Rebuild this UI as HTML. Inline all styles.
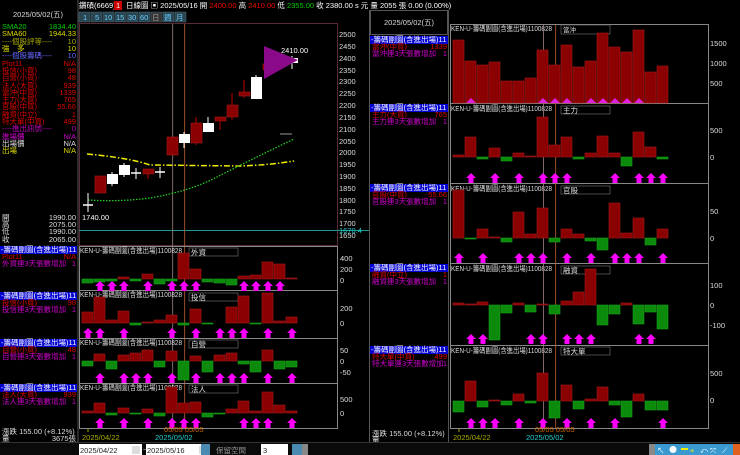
<!DOCTYPE html><html><head><meta charset="utf-8"><style>
body{margin:0;background:#000;width:740px;height:455px;overflow:hidden}
svg{display:block}
text{font-family:"Liberation Sans","Noto Sans CJK TC",sans-serif;font-size:7.5px}
.r{fill:#8b0000;stroke:#a51a1a;stroke-width:.6}
.g{fill:#0b8a0b;stroke:#1aa01a;stroke-width:.6}
.w{fill:#fff}
.ax{fill:#ddd;font-size:7.5px}
.t{fill:#ddd;font-size:6.5px}
.fr{fill:none;stroke:#888;stroke-width:1}
.s{font-size:6.2px}
</style></head><body>
<svg width="740" height="455" viewBox="0 0 740 455" xmlns="http://www.w3.org/2000/svg">
<defs>
<symbol id="ar" viewBox="0 0 10 10"><polygon points="5,0 10,5 7.5,5 7.5,10 2.5,10 2.5,5 0,5" fill="#f0f"/></symbol>
<symbol id="tr" viewBox="0 0 10 5"><polygon points="5,0 10,5 0,5" fill="#e020e0"/></symbol>
</defs>
<rect width="740" height="455" fill="#000"/>
<!-- header -->
<text x="79" y="8" fill="#fff">鑽碩(6669)</text>
<rect x="114" y="1" width="8" height="9" fill="#c00"/><text x="116" y="8" fill="#fff">1</text>
<text x="126" y="8" fill="#fff">日線圖 ▣ 2025/05/16 開 <tspan fill="#e00">2400.00</tspan> 高 <tspan fill="#e00">2410.00</tspan> 低 <tspan fill="#0c0">2355.00</tspan> 收 2380.00 s 元 量 2055 張  0.00 (0.00%)</text>
<g fill="#2a4550" stroke="#4a6a78" stroke-width=".5">
<rect x="79" y="12" width="11" height="10"/><rect x="91" y="12" width="11" height="10"/><rect x="103" y="12" width="11" height="10"/><rect x="115" y="12" width="11" height="10"/><rect x="127" y="12" width="11" height="10"/><rect x="139" y="12" width="11" height="10"/><rect x="151" y="12" width="11" height="10" fill="#333"/><rect x="163" y="12" width="11" height="10"/><rect x="175" y="12" width="11" height="10"/></g>
<g fill="#6cf" font-size="7"><text x="83" y="20">1</text><text x="95" y="20">5</text><text x="104" y="20">10</text><text x="116" y="20">15</text><text x="128" y="20">30</text><text x="140" y="20">60</text><text x="152" y="20" fill="#999">日</text><text x="164" y="20">週</text><text x="176" y="20">月</text></g>
<line x1="78" y1="0" x2="78" y2="443" stroke="#555"/>
<text x="13" y="17" fill="#ddd" font-size="7">2025/05/02(五)</text>
<!-- left info -->
<g class="s">
<text x="2" y="29" fill="#0c0">SMA20</text><text x="76" y="29" fill="#0c0" text-anchor="end">1834.40</text>
<text x="2" y="36" fill="#dd0">SMA60</text><text x="76" y="36" fill="#dd0" text-anchor="end">1944.33</text>
<text x="2" y="44" fill="#aa0">----個股評等----</text><text x="76" y="44" fill="#aa0" text-anchor="end">10</text>
<text x="2" y="51" fill="#dd0">強　多</text><text x="76" y="51" fill="#dd0" text-anchor="end">10</text>
<text x="2" y="58" fill="#66f">----個股籌碼----</text><text x="76" y="58" fill="#66f" text-anchor="end">10</text>
<text x="2" y="66" fill="#d00">Plot11</text><text x="76" y="66" fill="#d00" text-anchor="end">N/A</text>
<text x="2" y="73" fill="#d00">投信(小買)</text><text x="76" y="73" fill="#d00" text-anchor="end">98</text>
<text x="2" y="80" fill="#d00">自營(小買)</text><text x="76" y="80" fill="#d00" text-anchor="end">48</text>
<text x="2" y="88" fill="#d00">法人(大買)</text><text x="76" y="88" fill="#d00" text-anchor="end">939</text>
<text x="2" y="95" fill="#d00">當沖(中買)</text><text x="76" y="95" fill="#d00" text-anchor="end">1339</text>
<text x="2" y="102" fill="#d00">主力(大買)</text><text x="76" y="102" fill="#d00" text-anchor="end">765</text>
<text x="2" y="109" fill="#d00">官股(中買)</text><text x="76" y="109" fill="#d00" text-anchor="end">55.66</text>
<text x="2" y="117" fill="#d00">融資(中立)</text><text x="76" y="117" fill="#d00" text-anchor="end">1</text>
<text x="2" y="124" fill="#d00">特大單(中買)</text><text x="76" y="124" fill="#d00" text-anchor="end">499</text>
<text x="2" y="131" fill="#b0b">----進出訊號----</text><text x="76" y="131" fill="#b0b" text-anchor="end">0</text>
<text x="2" y="139" fill="#c0c">進場價</text><text x="76" y="139" fill="#c0c" text-anchor="end">N/A</text>
<text x="2" y="146" fill="#ddd">出場價</text><text x="76" y="146" fill="#ddd" text-anchor="end">N/A</text>
<text x="2" y="153" fill="#dd0">出場</text><text x="76" y="153" fill="#dd0" text-anchor="end">N/A</text>
<text x="2" y="220" fill="#ddd">開</text><text x="76" y="220" fill="#ddd" text-anchor="end">1990.00</text>
<text x="2" y="227" fill="#ddd">高</text><text x="76" y="227" fill="#ddd" text-anchor="end">2075.00</text>
<text x="2" y="234" fill="#ddd">低</text><text x="76" y="234" fill="#ddd" text-anchor="end">1990.00</text>
<text x="2" y="242" fill="#ddd">收</text><text x="76" y="242" fill="#ddd" text-anchor="end">2065.00</text>
</g>
<!-- left sub labels -->
<g class="s">
<rect x="0" y="246" width="77" height="8" fill="#0000d0"/><text x="1" y="252" fill="#fff">-籌碼副圖(含進出場)11</text><text x="2" y="259" fill="#d00">Plot11</text><text x="76" y="259" fill="#d00" text-anchor="end">N/A</text><text x="2" y="266" fill="#c0c">外資連3天張數增加</text><text x="76" y="266" fill="#c0c" text-anchor="end">1</text>
<rect x="0" y="292" width="77" height="8" fill="#0000d0"/><text x="1" y="298" fill="#fff">-籌碼副圖(含進出場)11</text><text x="2" y="305" fill="#d00">投信(小買)</text><text x="76" y="305" fill="#d00" text-anchor="end">98</text><text x="2" y="312" fill="#c0c">投信連3天張數增加</text><text x="76" y="312" fill="#c0c" text-anchor="end">1</text>
<rect x="0" y="339" width="77" height="8" fill="#0000d0"/><text x="1" y="345" fill="#fff">-籌碼副圖(含進出場)11</text><text x="2" y="352" fill="#d00">自營(小買)</text><text x="76" y="352" fill="#d00" text-anchor="end">48</text><text x="2" y="359" fill="#c0c">自營連3天張數增加</text><text x="76" y="359" fill="#c0c" text-anchor="end">1</text>
<rect x="0" y="384" width="77" height="8" fill="#0000d0"/><text x="1" y="390" fill="#fff">-籌碼副圖(含進出場)11</text><text x="2" y="397" fill="#d00">法人(大買)</text><text x="76" y="397" fill="#d00" text-anchor="end">939</text><text x="2" y="404" fill="#c0c">法人連3天張數增加</text><text x="76" y="404" fill="#c0c" text-anchor="end">1</text>
<text x="2" y="434" fill="#ddd" font-size="7">漲跌   155.00 (+8.12%)</text><text x="2" y="441" fill="#ddd" font-size="7">量</text><text x="76" y="441" fill="#ddd" text-anchor="end" font-size="7">3675張</text>
</g>
<!-- main chart frame -->
<rect x="79.5" y="23.5" width="258" height="222" fill="none" stroke="#5a2a35"/>
<g class="ax">
<text x="339" y="37">2500</text><text x="339" y="49">2450</text><text x="339" y="61">2400</text><text x="339" y="73">2350</text><text x="339" y="84">2300</text><text x="339" y="96">2250</text><text x="339" y="108">2200</text><text x="339" y="120">2150</text><text x="339" y="132">2100</text><text x="339" y="144">2050</text><text x="339" y="155">2000</text><text x="339" y="167">1950</text><text x="339" y="179">1900</text><text x="339" y="191">1850</text><text x="339" y="203">1800</text><text x="339" y="214">1750</text><text x="339" y="226">1700</text><text x="339" y="238">1650</text>
</g>
<line x1="79" y1="230.5" x2="370" y2="230.5" stroke="#1a9a9a"/>
<text x="339" y="233" fill="#2cc" font-size="7.5">1670.4</text>
<line x1="172.7" y1="24" x2="172.7" y2="428" stroke="#a08080" stroke-width=".8"/>
<line x1="184.7" y1="24" x2="184.7" y2="428" stroke="#c06030" stroke-width=".8"/>
<!-- SMA lines -->
<path d="M87,154 Q130,158 150,165 L240,166 Q270,165 294,161" fill="none" stroke="#ee0" stroke-width="1.5" stroke-dasharray="6,2,1.5,2"/>
<path d="M88,200 Q120,202 150,198 Q190,191 215,178 Q250,160 294,139" fill="none" stroke="#2c2" stroke-width="1.3" stroke-dasharray="1.5,1.5"/>
<line x1="280" y1="134" x2="292" y2="134" stroke="#999"/>
<!-- candles -->
<g stroke-width="1">
<line x1="88" y1="193" x2="88" y2="212" stroke="#fff"/><line x1="83" y1="205" x2="93" y2="205" stroke="#fff" stroke-width="1.5"/>
<rect x="95" y="176" width="11" height="17" class="r"/>
<line x1="112" y1="172" x2="112" y2="186" stroke="#fff"/><rect x="107" y="174" width="11" height="10" class="w"/>
<line x1="124" y1="163" x2="124" y2="177" stroke="#fff"/><rect x="119" y="165" width="11" height="10" class="w"/>
<line x1="136" y1="168" x2="136" y2="179" stroke="#fff"/><line x1="131" y1="173" x2="141" y2="173" stroke="#fff" stroke-width="1.5"/>
<line x1="148" y1="169" x2="148" y2="179" stroke="#b00"/><rect x="143" y="169" width="11" height="5" class="r"/>
<line x1="160" y1="167" x2="160" y2="178" stroke="#fff"/><line x1="155" y1="172" x2="165" y2="172" stroke="#fff" stroke-width="1.5"/>
<rect x="167" y="137" width="11" height="18" class="r"/>
<line x1="184" y1="132" x2="184" y2="148" stroke="#fff"/><rect x="179" y="134" width="11" height="9" class="w"/>
<line x1="196" y1="117" x2="196" y2="145" stroke="#b00"/><rect x="191" y="123" width="11" height="20" class="r"/>
<line x1="208" y1="117" x2="208" y2="132" stroke="#fff"/><rect x="203" y="123" width="11" height="9" class="w"/>
<line x1="220" y1="117" x2="220" y2="130" stroke="#b00"/><rect x="215" y="117" width="11" height="4" class="r"/>
<line x1="232" y1="93" x2="232" y2="120" stroke="#b00"/><rect x="227" y="105" width="11" height="12" class="r"/>
<line x1="244" y1="80" x2="244" y2="98" stroke="#b00"/><rect x="239" y="92" width="11" height="4" class="r"/>
<line x1="256" y1="75" x2="256" y2="99" stroke="#fff"/><rect x="251" y="77" width="11" height="22" class="w"/>
<line x1="268" y1="62" x2="268" y2="76" stroke="#b00"/><rect x="263" y="64" width="11" height="6" class="r"/>
<line x1="292" y1="56" x2="292" y2="69" stroke="#fff"/><rect x="287" y="58" width="11" height="5" class="w"/>
</g>
<polygon points="264,46 298,60 264,79" fill="#8a0a8a"/>
<text x="281" y="53" fill="#fff" font-size="7.5">2410.00</text>
<text x="82" y="220" fill="#fff" font-size="7.5">1740.00</text>
<!-- left sub panels -->
<g class="fr"><rect x="79.5" y="246.5" width="258" height="44"/><rect x="79.5" y="290.5" width="258" height="48"/><rect x="79.5" y="338.5" width="258" height="45"/><rect x="79.5" y="383.5" width="258" height="45"/></g>
<g class="t">
<text x="80" y="253" textLength="102" lengthAdjust="spacingAndGlyphs">KEN-U-籌碼副圖(含進出場)1100828</text><text x="80" y="297" textLength="102" lengthAdjust="spacingAndGlyphs">KEN-U-籌碼副圖(含進出場)1100828</text><text x="80" y="345" textLength="102" lengthAdjust="spacingAndGlyphs">KEN-U-籌碼副圖(含進出場)1100828</text><text x="80" y="390" textLength="102" lengthAdjust="spacingAndGlyphs">KEN-U-籌碼副圖(含進出場)1100828</text>
</g>
<g fill="#000" stroke="#777" stroke-width=".6"><rect x="189" y="248" width="49" height="8"/><rect x="189" y="293" width="49" height="8"/><rect x="189" y="340" width="49" height="8"/><rect x="189" y="385" width="49" height="8"/>
<rect x="561" y="106" width="49" height="8"/><rect x="561" y="186" width="49" height="8"/><rect x="561" y="266" width="49" height="8"/><rect x="561" y="347" width="49" height="8"/></g>
<g class="t"><text x="191" y="255">外資</text><text x="191" y="300">投信</text><text x="191" y="347">自營</text><text x="191" y="392">法人</text>
<text x="563" y="113">主力</text><text x="563" y="193">官股</text><text x="563" y="273">融資</text><text x="563" y="354">特大單</text></g>
<g class="ax">
<text x="340" y="261">400</text><text x="340" y="272">200</text><text x="340" y="283">0</text>
<text x="340" y="311">200</text><text x="340" y="326">0</text>
<text x="340" y="353">50</text><text x="340" y="364">0</text><text x="340" y="375">-50</text>
<text x="340" y="402">500</text><text x="340" y="416">0</text>
</g>
<!-- 外資 -->
<rect x="82" y="279" width="11" height="4" class="g"/><rect x="94" y="279" width="11" height="3" class="g"/><rect x="106" y="279" width="11" height="2" class="g"/><rect x="118" y="277" width="11" height="2" class="r"/><rect x="130" y="279" width="11" height="2" class="g"/><rect x="142" y="274" width="11" height="5" class="r"/><rect x="154" y="279" width="11" height="5" class="g"/><rect x="166" y="279" width="11" height="2" class="g"/><rect x="178" y="253" width="11" height="26" class="r"/><rect x="190" y="269" width="11" height="10" class="r"/><rect x="202" y="279" width="11" height="3" class="g"/><rect x="214" y="279" width="11" height="4" class="g"/><rect x="226" y="279" width="11" height="6" class="g"/><rect x="238" y="276" width="11" height="3" class="r"/><rect x="250" y="275" width="11" height="4" class="r"/><rect x="262" y="262" width="11" height="17" class="r"/><rect x="274" y="264" width="11" height="15" class="r"/><rect x="286" y="278" width="11" height="1" class="r"/>
<g><use href="#ar" x="95" y="281" width="10" height="10"/><use href="#ar" x="107" y="281" width="10" height="10"/><use href="#ar" x="119" y="281" width="10" height="10"/><use href="#ar" x="143" y="281" width="10" height="10"/><use href="#ar" x="167" y="281" width="10" height="10"/><use href="#ar" x="179" y="281" width="10" height="10"/><use href="#ar" x="191" y="281" width="10" height="10"/><use href="#ar" x="239" y="281" width="10" height="10"/><use href="#ar" x="251" y="281" width="10" height="10"/><use href="#ar" x="263" y="281" width="10" height="10"/><use href="#ar" x="275" y="281" width="10" height="10"/></g>
<!-- 投信 -->
<rect x="82" y="312" width="11" height="11" class="r"/><rect x="94" y="297" width="11" height="26" class="r"/><rect x="106" y="320" width="11" height="3" class="r"/><rect x="118" y="311" width="11" height="12" class="r"/><rect x="130" y="323" width="11" height="2" class="g"/><rect x="142" y="322" width="11" height="1" class="r"/><rect x="154" y="320" width="11" height="3" class="r"/><rect x="166" y="315" width="11" height="8" class="r"/><rect x="178" y="323" width="11" height="2" class="g"/><rect x="190" y="309" width="11" height="14" class="r"/><rect x="202" y="323" width="11" height="1" class="g"/><rect x="226" y="307" width="11" height="16" class="r"/><rect x="238" y="296" width="11" height="27" class="r"/><rect x="250" y="323" width="11" height="1" class="g"/><rect x="262" y="293" width="11" height="30" class="r"/><rect x="274" y="321" width="11" height="2" class="r"/><rect x="286" y="317" width="11" height="6" class="r"/>
<g><use href="#ar" x="83" y="328" width="10" height="10"/><use href="#ar" x="95" y="328" width="10" height="10"/><use href="#ar" x="119" y="328" width="10" height="10"/><use href="#ar" x="167" y="328" width="10" height="10"/><use href="#ar" x="191" y="328" width="10" height="10"/><use href="#ar" x="215" y="328" width="10" height="10"/><use href="#ar" x="227" y="328" width="10" height="10"/><use href="#ar" x="239" y="328" width="10" height="10"/><use href="#ar" x="263" y="328" width="10" height="10"/><use href="#ar" x="287" y="328" width="10" height="10"/></g>
<!-- 自營 -->
<rect x="82" y="361" width="11" height="5" class="g"/><rect x="94" y="354" width="11" height="7" class="r"/><rect x="106" y="361" width="11" height="8" class="g"/><rect x="118" y="355" width="11" height="6" class="r"/><rect x="130" y="353" width="11" height="8" class="r"/><rect x="142" y="350" width="11" height="11" class="r"/><rect x="154" y="361" width="11" height="6" class="g"/><rect x="166" y="351" width="11" height="10" class="r"/><rect x="178" y="361" width="11" height="19" class="g"/><rect x="190" y="356" width="11" height="5" class="r"/><rect x="202" y="361" width="11" height="11" class="g"/><rect x="214" y="355" width="11" height="6" class="r"/><rect x="226" y="353" width="11" height="8" class="r"/><rect x="238" y="361" width="11" height="3" class="g"/><rect x="250" y="361" width="11" height="11" class="g"/><rect x="262" y="350" width="11" height="11" class="r"/><rect x="274" y="361" width="11" height="8" class="g"/><rect x="286" y="361" width="11" height="6" class="g"/>
<g><use href="#ar" x="95" y="373" width="10" height="10"/><use href="#ar" x="119" y="373" width="10" height="10"/><use href="#ar" x="131" y="373" width="10" height="10"/><use href="#ar" x="143" y="373" width="10" height="10"/><use href="#ar" x="167" y="373" width="10" height="10"/><use href="#ar" x="191" y="373" width="10" height="10"/><use href="#ar" x="215" y="373" width="10" height="10"/><use href="#ar" x="227" y="373" width="10" height="10"/><use href="#ar" x="239" y="373" width="10" height="10"/><use href="#ar" x="263" y="373" width="10" height="10"/><use href="#ar" x="287" y="373" width="10" height="10"/></g>
<!-- 法人 -->
<rect x="82" y="411" width="11" height="2" class="r"/><rect x="94" y="403" width="11" height="10" class="r"/><rect x="106" y="413" width="11" height="2" class="g"/><rect x="118" y="408" width="11" height="5" class="r"/><rect x="130" y="413" width="11" height="1" class="g"/><rect x="142" y="409" width="11" height="4" class="r"/><rect x="154" y="413" width="11" height="3" class="g"/><rect x="166" y="387" width="11" height="26" class="r"/><rect x="178" y="403" width="11" height="10" class="r"/><rect x="190" y="402" width="11" height="11" class="r"/><rect x="202" y="413" width="11" height="4" class="g"/><rect x="214" y="413" width="11" height="1" class="g"/><rect x="226" y="409" width="11" height="4" class="r"/><rect x="238" y="401" width="11" height="12" class="r"/><rect x="250" y="411" width="11" height="2" class="r"/><rect x="262" y="392" width="11" height="21" class="r"/><rect x="274" y="405" width="11" height="8" class="r"/><rect x="286" y="411" width="11" height="2" class="r"/>
<g><use href="#ar" x="95" y="418" width="10" height="10"/><use href="#ar" x="119" y="418" width="10" height="10"/><use href="#ar" x="143" y="418" width="10" height="10"/><use href="#ar" x="167" y="418" width="10" height="10"/><use href="#ar" x="179" y="418" width="10" height="10"/><use href="#ar" x="191" y="418" width="10" height="10"/><use href="#ar" x="239" y="418" width="10" height="10"/><use href="#ar" x="251" y="418" width="10" height="10"/><use href="#ar" x="263" y="418" width="10" height="10"/><use href="#ar" x="287" y="418" width="10" height="10"/></g>
<!-- dates left -->
<line x1="88" y1="429" x2="88" y2="432" stroke="#aa0"/>
<text x="82" y="440" fill="#aa0" font-size="7.5">2025/04/22</text>
<text x="164" y="432" fill="#c60" font-size="4">05/05 05/05</text>
<text x="155" y="440" fill="#2cc" font-size="7.5">2025/05/02</text>
<!-- right section -->
<line x1="369.5" y1="10" x2="369.5" y2="443" stroke="#555"/>
<line x1="448.5" y1="10" x2="448.5" y2="443" stroke="#555"/>
<rect x="370.5" y="10.5" width="77" height="24" fill="none" stroke="#555"/>
<text x="384" y="25" fill="#ddd" font-size="7">2025/05/02(五)</text>
<g class="s">
<rect x="370" y="36" width="78" height="8" fill="#0000d0"/><text x="371" y="42" fill="#fff">-籌碼副圖(含進出場)11</text><text x="372" y="49" fill="#d00">當沖(中買)</text><text x="447" y="49" fill="#d00" text-anchor="end">1339</text><text x="372" y="56" fill="#c0c">當沖連3天張數增加</text><text x="447" y="56" fill="#c0c" text-anchor="end">1</text>
<rect x="370" y="104" width="78" height="8" fill="#0000d0"/><text x="371" y="110" fill="#fff">-籌碼副圖(含進出場)11</text><text x="372" y="117" fill="#d00">主力(大買)</text><text x="447" y="117" fill="#d00" text-anchor="end">765</text><text x="372" y="124" fill="#c0c">主力連3天張數增加</text><text x="447" y="124" fill="#c0c" text-anchor="end">1</text>
<rect x="370" y="184" width="78" height="8" fill="#0000d0"/><text x="371" y="190" fill="#fff">-籌碼副圖(含進出場)11</text><text x="372" y="197" fill="#d00">官股(中買)</text><text x="447" y="197" fill="#d00" text-anchor="end">55.66</text><text x="372" y="204" fill="#c0c">官股連3天張數增加</text><text x="447" y="204" fill="#c0c" text-anchor="end">1</text>
<rect x="370" y="264" width="78" height="8" fill="#0000d0"/><text x="371" y="270" fill="#fff">-籌碼副圖(含進出場)11</text><text x="372" y="277" fill="#d00">融資(中立)</text><text x="447" y="277" fill="#d00" text-anchor="end">1</text><text x="372" y="284" fill="#c0c">融資連3天張數增加</text><text x="447" y="284" fill="#c0c" text-anchor="end">1</text>
<rect x="370" y="346" width="78" height="8" fill="#0000d0"/><text x="371" y="352" fill="#fff">-籌碼副圖(含進出場)11</text><text x="372" y="359" fill="#d00">特大單(中買)</text><text x="447" y="359" fill="#d00" text-anchor="end">499</text><text x="372" y="366" fill="#c0c">特大單連3天張數增加</text><text x="447" y="366" fill="#c0c" text-anchor="end">1</text>
<text x="372" y="436" fill="#ddd" font-size="7">漲跌   155.00 (+8.12%)</text><text x="372" y="442" fill="#ddd" font-size="6">量</text>
</g>
<g class="fr"><rect x="450.5" y="24.5" width="258" height="79"/><rect x="450.5" y="103.5" width="258" height="80"/><rect x="450.5" y="183.5" width="258" height="80"/><rect x="450.5" y="263.5" width="258" height="82"/><rect x="450.5" y="345.5" width="258" height="83"/></g>
<g class="t"><text x="451" y="31" textLength="101" lengthAdjust="spacingAndGlyphs">KEN-U-籌碼副圖(含進出場)1100828</text><text x="451" y="111" textLength="101" lengthAdjust="spacingAndGlyphs">KEN-U-籌碼副圖(含進出場)1100828</text><text x="451" y="191" textLength="101" lengthAdjust="spacingAndGlyphs">KEN-U-籌碼副圖(含進出場)1100828</text><text x="451" y="271" textLength="101" lengthAdjust="spacingAndGlyphs">KEN-U-籌碼副圖(含進出場)1100828</text><text x="451" y="353" textLength="101" lengthAdjust="spacingAndGlyphs">KEN-U-籌碼副圖(含進出場)1100828</text></g>
<rect x="561" y="25" width="49" height="9" fill="#000" stroke="#777" stroke-width=".6"/><text x="563" y="32" class="t">當沖</text>
<line x1="543.6" y1="25" x2="543.6" y2="428" stroke="#a08080" stroke-width=".8"/>
<line x1="555.7" y1="25" x2="555.7" y2="428" stroke="#c06030" stroke-width=".8"/>
<g class="ax">
<text x="710" y="46">1500</text><text x="710" y="66">1000</text><text x="710" y="86">500</text>
<text x="710" y="133">500</text><text x="710" y="160">0</text>
<text x="710" y="214">50</text><text x="710" y="241">0</text>
<text x="710" y="288">100</text><text x="710" y="308">0</text><text x="710" y="328">-100</text>
<text x="710" y="376">500</text><text x="710" y="403">0</text>
</g>
<!-- 當沖 -->
<rect x="453" y="40" width="11" height="63" class="r"/><rect x="465" y="61" width="11" height="42" class="r"/><rect x="477" y="65" width="11" height="38" class="r"/><rect x="489" y="62" width="11" height="41" class="r"/><rect x="501" y="81" width="11" height="22" class="r"/><rect x="513" y="81" width="11" height="22" class="r"/><rect x="525" y="78" width="11" height="25" class="r"/><rect x="537" y="50" width="11" height="53" class="r"/><rect x="549" y="65" width="11" height="38" class="r"/><rect x="561" y="45" width="11" height="58" class="r"/><rect x="573" y="67" width="11" height="36" class="r"/><rect x="585" y="61" width="11" height="42" class="r"/><rect x="597" y="33" width="11" height="70" class="r"/><rect x="609" y="47" width="11" height="56" class="r"/><rect x="621" y="52" width="11" height="51" class="r"/><rect x="633" y="30" width="11" height="73" class="r"/><rect x="645" y="72" width="11" height="31" class="r"/><rect x="657" y="66" width="11" height="37" class="r"/>
<g><use href="#tr" x="466" y="98" width="10" height="5"/><use href="#tr" x="538" y="98" width="10" height="5"/><use href="#tr" x="550" y="98" width="10" height="5"/><use href="#tr" x="562" y="98" width="10" height="5"/><use href="#tr" x="586" y="98" width="10" height="5"/><use href="#tr" x="598" y="98" width="10" height="5"/><use href="#tr" x="610" y="98" width="10" height="5"/><use href="#tr" x="622" y="98" width="10" height="5"/><use href="#tr" x="634" y="98" width="10" height="5"/></g>
<!-- 主力 -->
<rect x="453" y="155" width="11" height="2" class="r"/><rect x="465" y="137" width="11" height="20" class="r"/><rect x="477" y="157" width="11" height="2" class="g"/><rect x="489" y="148" width="11" height="9" class="r"/><rect x="501" y="157" width="11" height="4" class="g"/><rect x="513" y="153" width="11" height="4" class="r"/><rect x="525" y="156" width="11" height="1" class="r"/><rect x="537" y="117" width="11" height="40" class="r"/><rect x="549" y="145" width="11" height="12" class="r"/><rect x="561" y="137" width="11" height="20" class="r"/><rect x="573" y="157" width="11" height="2" class="g"/><rect x="585" y="153" width="11" height="4" class="r"/><rect x="597" y="136" width="11" height="21" class="r"/><rect x="609" y="153" width="11" height="4" class="r"/><rect x="621" y="157" width="11" height="9" class="g"/><rect x="633" y="132" width="11" height="25" class="r"/><rect x="645" y="147" width="11" height="10" class="r"/><rect x="657" y="157" width="11" height="2" class="g"/>
<g><use href="#ar" x="466" y="173" width="10" height="10"/><use href="#ar" x="490" y="173" width="10" height="10"/><use href="#ar" x="514" y="173" width="10" height="10"/><use href="#ar" x="538" y="173" width="10" height="10"/><use href="#ar" x="550" y="173" width="10" height="10"/><use href="#ar" x="562" y="173" width="10" height="10"/><use href="#ar" x="610" y="173" width="10" height="10"/><use href="#ar" x="634" y="173" width="10" height="10"/><use href="#ar" x="646" y="173" width="10" height="10"/><use href="#ar" x="658" y="173" width="10" height="10"/></g>
<!-- 官股 -->
<rect x="453" y="190" width="11" height="48" class="r"/><rect x="465" y="238" width="11" height="1" class="g"/><rect x="477" y="229" width="11" height="9" class="r"/><rect x="489" y="237" width="11" height="1" class="r"/><rect x="501" y="238" width="11" height="4" class="g"/><rect x="513" y="212" width="11" height="26" class="r"/><rect x="525" y="234" width="11" height="4" class="r"/><rect x="537" y="208" width="11" height="30" class="r"/><rect x="549" y="238" width="11" height="4" class="g"/><rect x="561" y="229" width="11" height="9" class="r"/><rect x="573" y="234" width="11" height="4" class="r"/><rect x="585" y="238" width="11" height="3" class="g"/><rect x="597" y="238" width="11" height="12" class="g"/><rect x="609" y="203" width="11" height="35" class="r"/><rect x="621" y="233" width="11" height="5" class="r"/><rect x="633" y="218" width="11" height="20" class="r"/><rect x="645" y="238" width="11" height="7" class="g"/><rect x="657" y="229" width="11" height="9" class="r"/>
<g><use href="#ar" x="454" y="253" width="10" height="10"/><use href="#ar" x="478" y="253" width="10" height="10"/><use href="#ar" x="514" y="253" width="10" height="10"/><use href="#ar" x="526" y="253" width="10" height="10"/><use href="#ar" x="538" y="253" width="10" height="10"/><use href="#ar" x="562" y="253" width="10" height="10"/><use href="#ar" x="586" y="253" width="10" height="10"/><use href="#ar" x="610" y="253" width="10" height="10"/><use href="#ar" x="622" y="253" width="10" height="10"/><use href="#ar" x="634" y="253" width="10" height="10"/><use href="#ar" x="658" y="253" width="10" height="10"/></g>
<!-- 融資 -->
<rect x="453" y="303" width="11" height="2" class="r"/><rect x="465" y="304" width="11" height="1" class="r"/><rect x="477" y="302" width="11" height="3" class="r"/><rect x="489" y="305" width="11" height="35" class="g"/><rect x="501" y="305" width="11" height="8" class="g"/><rect x="513" y="303" width="11" height="2" class="r"/><rect x="525" y="305" width="11" height="7" class="g"/><rect x="537" y="304" width="11" height="1" class="r"/><rect x="549" y="305" width="11" height="9" class="g"/><rect x="561" y="301" width="11" height="4" class="r"/><rect x="573" y="292" width="11" height="13" class="r"/><rect x="585" y="269" width="11" height="36" class="r"/><rect x="597" y="305" width="11" height="20" class="g"/><rect x="609" y="305" width="11" height="9" class="g"/><rect x="621" y="303" width="11" height="2" class="r"/><rect x="633" y="305" width="11" height="19" class="g"/><rect x="645" y="305" width="11" height="7" class="g"/><rect x="657" y="305" width="11" height="24" class="g"/>
<g><use href="#ar" x="466" y="334" width="10" height="10"/><use href="#ar" x="478" y="334" width="10" height="10"/><use href="#ar" x="526" y="334" width="10" height="10"/><use href="#ar" x="538" y="334" width="10" height="10"/><use href="#ar" x="562" y="334" width="10" height="10"/><use href="#ar" x="574" y="334" width="10" height="10"/><use href="#ar" x="586" y="334" width="10" height="10"/><use href="#ar" x="634" y="334" width="10" height="10"/><use href="#ar" x="646" y="334" width="10" height="10"/></g>
<!-- 特大單 -->
<rect x="453" y="401" width="11" height="11" class="g"/><rect x="465" y="381" width="11" height="20" class="r"/><rect x="477" y="401" width="11" height="6" class="g"/><rect x="489" y="400" width="11" height="1" class="r"/><rect x="501" y="401" width="11" height="4" class="g"/><rect x="513" y="394" width="11" height="7" class="r"/><rect x="525" y="401" width="11" height="2" class="g"/><rect x="537" y="373" width="11" height="28" class="r"/><rect x="549" y="401" width="11" height="17" class="g"/><rect x="561" y="385" width="11" height="16" class="r"/><rect x="573" y="401" width="11" height="8" class="g"/><rect x="585" y="399" width="11" height="2" class="r"/><rect x="597" y="387" width="11" height="14" class="r"/><rect x="609" y="401" width="11" height="4" class="g"/><rect x="621" y="401" width="11" height="16" class="g"/><rect x="633" y="394" width="11" height="7" class="r"/><rect x="645" y="401" width="11" height="9" class="g"/><rect x="657" y="401" width="11" height="9" class="g"/>
<g><use href="#ar" x="466" y="418" width="10" height="10"/><use href="#ar" x="478" y="418" width="10" height="10"/><use href="#ar" x="490" y="418" width="10" height="10"/><use href="#ar" x="514" y="418" width="10" height="10"/><use href="#ar" x="538" y="418" width="10" height="10"/><use href="#ar" x="562" y="418" width="10" height="10"/><use href="#ar" x="586" y="418" width="10" height="10"/><use href="#ar" x="610" y="418" width="10" height="10"/><use href="#ar" x="658" y="418" width="10" height="10"/></g>
<line x1="459" y1="429" x2="459" y2="432" stroke="#aa0"/>
<text x="453" y="440" fill="#aa0" font-size="7.5">2025/04/22</text>
<text x="535" y="432" fill="#c60" font-size="4">05/05 05/05</text>
<text x="526" y="440" fill="#2cc" font-size="7.5">2025/05/02</text>
<!-- bottom bar -->
<rect x="0" y="443" width="740" height="12" fill="#0a0a0a"/>
<line x1="0" y1="442.5" x2="740" y2="442.5" stroke="#333"/>
<rect x="79" y="444" width="63" height="11" fill="#fff"/><text x="80" y="453" fill="#222" font-size="8.5">2025/04/22</text><rect x="132" y="446" width="8" height="8" fill="#ddd"/>
<text x="143" y="452" fill="#ccc" font-size="8">~</text>
<rect x="146" y="444" width="63" height="11" fill="#fff"/><text x="147" y="453" fill="#222" font-size="8.5">2025/05/16</text><rect x="199" y="446" width="8" height="8" fill="#ddd"/>
<rect x="201" y="444" width="9" height="11" fill="#4a8ab0"/>
<text x="216" y="453" fill="#999" font-size="9.5">保留空間</text>
<rect x="261" y="444" width="27" height="11" fill="#fff"/><text x="263" y="453" fill="#222" font-size="8.5">3</text>
<rect x="292" y="444" width="10" height="11" fill="#4a8ab0"/><rect x="302" y="444" width="6" height="11" fill="#888"/>
<rect x="649" y="444" width="6" height="11" fill="#888"/>
<rect x="655" y="444" width="78" height="11" fill="#3a9ad0"/>
<g fill="#fff" font-size="8"><text x="657" y="453">↖</text><circle cx="673" cy="449.5" r="3.5"/><rect x="681" y="448" width="7" height="2" fill="#ee0"/><text x="690" y="453" fill="#ee0">+</text><text x="700" y="453">⤺</text><text x="710" y="453">⤧</text><text x="722" y="453">⟋</text></g>
<rect x="733" y="444" width="7" height="11" fill="#e06020"/>
</svg>
</body></html>
